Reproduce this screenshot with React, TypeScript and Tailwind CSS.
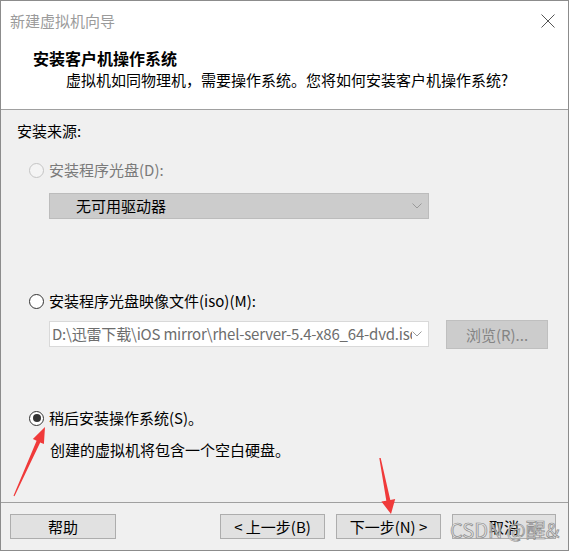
const font = { fontFamily: '"Noto Sans CJK SC", "Noto Sans", sans-serif' }

function Radio({ state }: { state: 'disabled' | 'off' | 'on' }) {
  const border = state === 'disabled' ? 'border-[#c4c4c4] bg-[#f4f4f4]' : 'border-[#333333] bg-white'
  return (
    <span className={`flex h-[15px] w-[15px] shrink-0 items-center justify-center rounded-full border ${border}`}>
      {state === 'on' && <span className="h-[8px] w-[8px] rounded-full bg-[#333333]" />}
    </span>
  )
}

function Chevron() {
  return (
    <svg width="10" height="6" viewBox="0 0 10 6" className="shrink-0">
      <path d="M0.5 0.5 L5 5 L9.5 0.5" fill="none" stroke="#9a9a9a" strokeWidth="1" />
    </svg>
  )
}

function Button({ label, width }: { label: string; width: string }) {
  return (
    <div className={`flex h-[25px] ${width} items-center justify-center border border-[#adadad] bg-[#e1e1e1] text-[15px] leading-[20px] text-black`}>
      {label}
    </div>
  )
}

export default function App() {
  return (
    <div className="relative h-[551px] w-[570px] overflow-hidden bg-white" style={font}>
      <div className="flex h-[551px] w-[569px] flex-col border-x border-t border-[#8c8c8c]">
        {/* Header */}
        <div className="flex h-[108px] flex-col bg-white">
          <div className="flex h-[39px] items-center justify-between pl-[9px] pr-[13px]">
            <span className="text-[15px] leading-[20px] text-[#9b9b9b]">新建虚拟机向导</span>
            <svg width="14" height="14" viewBox="0 0 14 14">
              <path d="M0.5 0.5 L13.5 13.5 M13.5 0.5 L0.5 13.5" stroke="#555" strokeWidth="1" />
            </svg>
          </div>
          <div className="mt-[8px] pl-[32px] text-[16px] font-bold leading-[20px] text-black">安装客户机操作系统</div>
          <div className="mt-[2px] pl-[65px] text-[15px] leading-[20px] text-black">
            虚拟机如同物理机，需要操作系统。您将如何安装客户机操作系统?
          </div>
        </div>
        <div className="h-px bg-[#a0a0a0]" />

        {/* Body */}
        <div className="flex h-[392px] flex-col bg-[#f0f0f0] pl-[16px] pt-[11px] text-[15px] leading-[20px]">
          <div className="text-black">安装来源:</div>

          <div className="mt-[19px] flex items-center gap-[5px] pl-[12px] text-[#7a7a7a]">
            <Radio state="disabled" />
            <span>安装程序光盘(D):</span>
          </div>
          <div className="ml-[32px] mt-[13px] flex h-[26px] w-[380px] items-center justify-between border border-[#bcbcbc] bg-[#cccccc] pl-[26px] pr-[6px]">
            <span className="text-black">无可用驱动器</span>
            <Chevron />
          </div>

          <div className="mt-[72px] flex items-center gap-[5px] pl-[12px] text-black">
            <Radio state="off" />
            <span>安装程序光盘映像文件(iso)(M):</span>
          </div>
          <div className="mt-[9px] flex items-start pl-[32px]">
            <div className="mt-[1px] flex h-[26px] w-[380px] items-center border border-[#d9d9d9] bg-white pl-[2px] pr-[6px]">
              <span className="w-[362px] overflow-hidden whitespace-nowrap tracking-[-0.2px] text-[#6d6d6d]">
                D:\迅雷下载\iOS mirror\rhel-server-5.4-x86_64-dvd.iso
              </span>
              <Chevron />
            </div>
            <div className="ml-[17px] flex h-[29px] w-[102px] items-center justify-center border border-[#bfbfbf] bg-[#cccccc] text-[#848484]">
              浏览(R)...
            </div>
          </div>

          <div className="mt-[59px] flex items-center gap-[5px] pl-[12px] text-black">
            <Radio state="on" />
            <span>稍后安装操作系统(S)。</span>
          </div>
          <div className="mt-[12px] pl-[33px] text-black">创建的虚拟机将包含一个空白硬盘。</div>
        </div>
        <div className="h-px bg-[#a0a0a0]" />

        {/* Footer */}
        <div className="flex h-[47px] items-start bg-[#f0f0f0] pl-[9px] pt-[11px]">
          <Button label="帮助" width="w-[106px]" />
          <div className="ml-[104px] flex gap-[11px]">
            <Button label="< 上一步(B)" width="w-[105px]" />
            <Button label="下一步(N) >" width="w-[105px]" />
            <Button label="取消" width="w-[104px]" />
          </div>
        </div>
        <div className="h-px bg-[#8c8c8c]" />
      </div>

      {/* Annotation arrows */}
      <svg className="pointer-events-none absolute left-0 top-0" width="570" height="551">
        <polygon
          points="13.5,495.8 36.6,440.8 32.9,439.1 45,427 43.9,444.1 40.2,442.4 14.5,496.2"
          fill="#f03a3a"
        />
        <polygon
          points="379.3,458.1 386.3,500.7 381.4,501.6 391,514 395.2,498.9 390.3,499.9 380.7,457.9"
          fill="#f03a3a"
        />
      </svg>

      {/* Watermark */}
      <div
        className="pointer-events-none absolute left-[450px] top-[517px] whitespace-nowrap text-[20px] leading-[26px] text-[#eaeaea]/70 [-webkit-text-stroke:0.7px_#8a8a8a]"
        style={font}
      >
        CSDN @醒&amp;
      </div>
    </div>
  )
}
